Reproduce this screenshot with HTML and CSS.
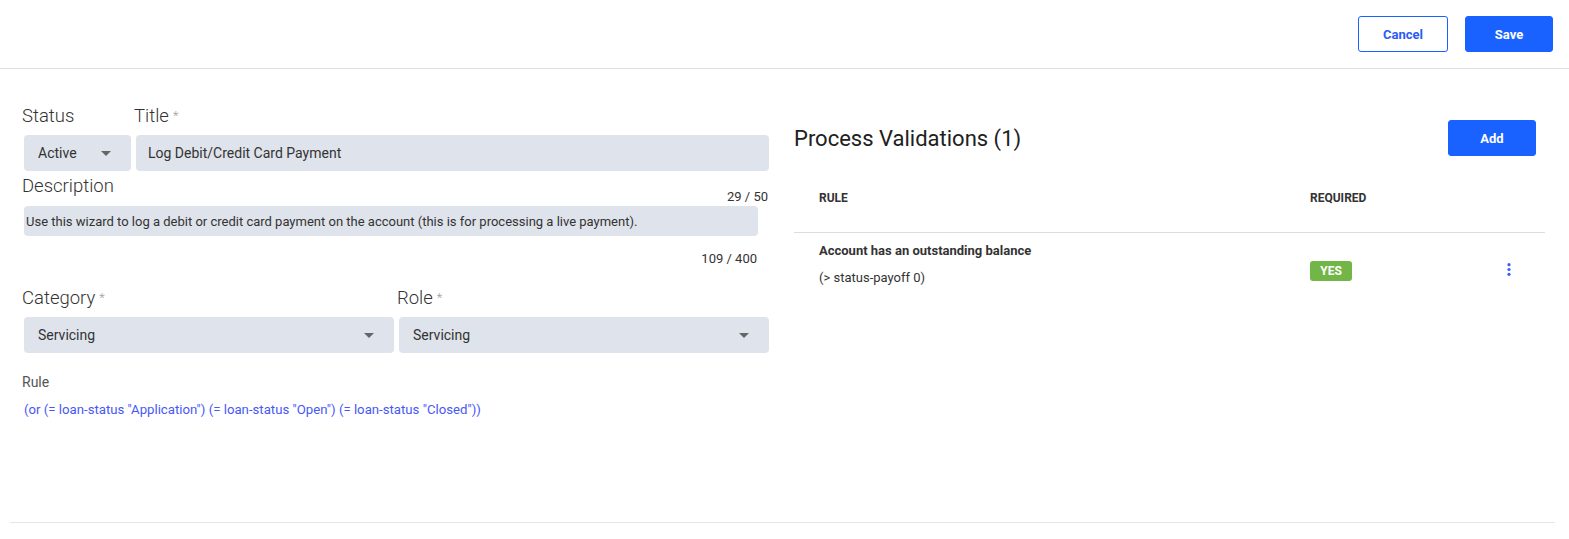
FILE: index.html
```html
<html>
<head>
<link rel="stylesheet" href="styles.css">
</head>
<body>
<div class="topbar">
  <button class="btn btn-outline">Cancel</button>
  <button class="btn btn-primary">Save</button>
</div>

<div class="content">
  <div class="form-col">
    <div class="row row-top">
      <div class="group">
        <label class="label">Status</label>
        <div class="field select">Active<span class="caret"></span></div>
      </div>
      <div class="group">
        <label class="label">Title<span class="req">*</span></label>
        <div class="field">Log Debit/Credit Card Payment</div>
      </div>
    </div>

    <div class="desc-head">
      <label class="label">Description</label>
      <span class="counter counter-title">29 / 50</span>
    </div>
    <div class="group group-desc">
      <div class="field field-desc">Use this wizard to log a debit or credit card payment on the account (this is for processing a live payment).</div>
      <div class="counter counter-desc">109 / 400</div>
    </div>

    <div class="row row-cat">
      <div class="group">
        <label class="label">Category<span class="req">*</span></label>
        <div class="field select">Servicing<span class="caret"></span></div>
      </div>
      <div class="group">
        <label class="label">Role<span class="req">*</span></label>
        <div class="field select">Servicing<span class="caret"></span></div>
      </div>
    </div>

    <div class="rule-label">Rule</div>
    <div class="rule-text">(or (= loan-status "Application") (= loan-status "Open") (= loan-status "Closed"))</div>
  </div>

  <div class="valid-col">
    <div class="valid-head">
      <h2>Process Validations (1)</h2>
      <button class="btn btn-primary btn-add">Add</button>
    </div>
    <div class="vtable">
      <div class="vrow vrow-head">
        <div class="cell cell-rule">RULE</div>
        <div class="cell">REQUIRED</div>
        <div class="cell"></div>
      </div>
      <div class="vrow">
        <div class="cell cell-rule">
          <div class="rule-name">Account has an outstanding balance</div>
          <div class="rule-expr">(&gt; status-payoff 0)</div>
        </div>
        <div class="cell"><span class="badge">YES</span></div>
        <div class="cell cell-menu">
          <svg width="4" height="13" viewBox="0 0 4 13"><circle cx="2" cy="1.7" r="1.6" fill="#3b5bff"/><circle cx="2" cy="6.5" r="1.6" fill="#3b5bff"/><circle cx="2" cy="11.3" r="1.6" fill="#3b5bff"/></svg>
        </div>
      </div>
    </div>
  </div>
</div>

<div class="bottom-rule"></div>
</body>
</html>
```

FILE: styles.css
```css
body {
  margin: 0;
  font-family: Roboto, "Liberation Sans", Arial, sans-serif;
  color: #333;
  background-color: #fff;
}

.topbar {
  height: 68px;
  border-bottom: 1px solid #e0e0e0;
  display: flex;
  justify-content: flex-end;
  align-items: center;
  gap: 17px;
  padding-right: 16px;
}

.btn {
  height: 36px;
  border-radius: 3px;
  font-family: Roboto, "Liberation Sans", Arial, sans-serif;
  font-size: 13px;
  font-weight: 700;
  cursor: pointer;
}

.btn-outline {
  width: 90px;
  background: #fff;
  color: #2a5cf5;
  border: 1px solid #1a62ff;
}

.btn-primary {
  width: 88px;
  background: #1a62ff;
  color: #fff;
  border: 1px solid #1a62ff;
}

.content {
  height: 453px;
  box-sizing: border-box;
  padding: 35px 24px 0 22px;
  display: grid;
  grid-template-columns: 748px 751px;
  column-gap: 24px;
}

/* left form */

.row {
  display: grid;
  column-gap: 2px;
}

.row-top {
  grid-template-columns: 110px 1fr;
}

.row-cat {
  grid-template-columns: 1fr 1fr;
  margin-top: 20px;
}

.label {
  display: block;
  font-size: 18.5px;
  font-weight: 300;
  line-height: 24px;
  color: #333;
}

.req {
  font-size: 13px;
  color: #9a9a9a;
  margin-left: 4px;
  vertical-align: 2px;
}

.field {
  margin: 7px 1px 0 2px;
  height: 36px;
  box-sizing: border-box;
  padding: 0 12px;
  background: #dfe3eb;
  border-radius: 4px;
  display: flex;
  align-items: center;
  font-size: 14px;
  color: #333;
}

.select {
  padding-left: 14px;
  justify-content: space-between;
}

.caret {
  width: 0;
  height: 0;
  margin-right: 8px;
  border-left: 5px solid transparent;
  border-right: 5px solid transparent;
  border-top: 5px solid #666;
}

.desc-head {
  display: flex;
  justify-content: space-between;
  align-items: flex-start;
  height: 31px;
  margin-top: 3px;
}

.counter {
  font-size: 13px;
  line-height: 14px;
  color: #333;
  text-align: right;
  padding-right: 2px;
}

.counter-title {
  margin-top: 16px;
}

.group-desc {
  margin-right: 11px;
}

.field-desc {
  margin-top: 1px;
  height: 30px;
  padding: 0 8px 0 2px;
  font-size: 13px;
}

.counter-desc {
  margin-top: 16px;
}

.rule-label {
  margin-top: 19px;
  font-size: 14px;
  line-height: 20px;
  color: #555;
}

.rule-text {
  margin-top: 9px;
  margin-left: 2px;
  font-size: 13.2px;
  line-height: 18px;
  color: #4758f6;
}

/* right validations */

.valid-head {
  display: flex;
  justify-content: space-between;
  align-items: center;
  margin-top: 16px;
  padding-right: 9px;
}

.valid-head h2 {
  margin: 0;
  font-size: 22px;
  font-weight: 400;
  color: #212121;
}

.vrow {
  display: grid;
  grid-template-columns: 516px 1fr 40px;
  padding-right: 16px;
}

.vrow-head {
  padding-top: 34px;
  height: 42px;
  border-bottom: 1px solid #ddd;
  font-size: 12px;
  font-weight: 700;
  line-height: 16px;
  color: #333;
}

.cell-rule {
  padding-left: 25px;
}

.rule-name {
  margin-top: 10px;
  font-size: 13px;
  font-weight: 700;
  line-height: 16px;
  color: #333;
}

.rule-expr {
  margin-top: 11px;
  font-size: 13px;
  line-height: 16px;
  color: #333;
}

.badge {
  display: inline-block;
  margin-top: 28px;
  width: 42px;
  height: 20px;
  line-height: 20px;
  border-radius: 3px;
  background: #73b648;
  color: #fff;
  font-size: 12px;
  font-weight: 700;
  text-align: center;
}

.cell-menu {
  display: flex;
  justify-content: center;
  padding-top: 30px;
}

.bottom-rule {
  margin: 0 14px 0 10px;
  border-top: 1px solid #e6e6e6;
}
```
